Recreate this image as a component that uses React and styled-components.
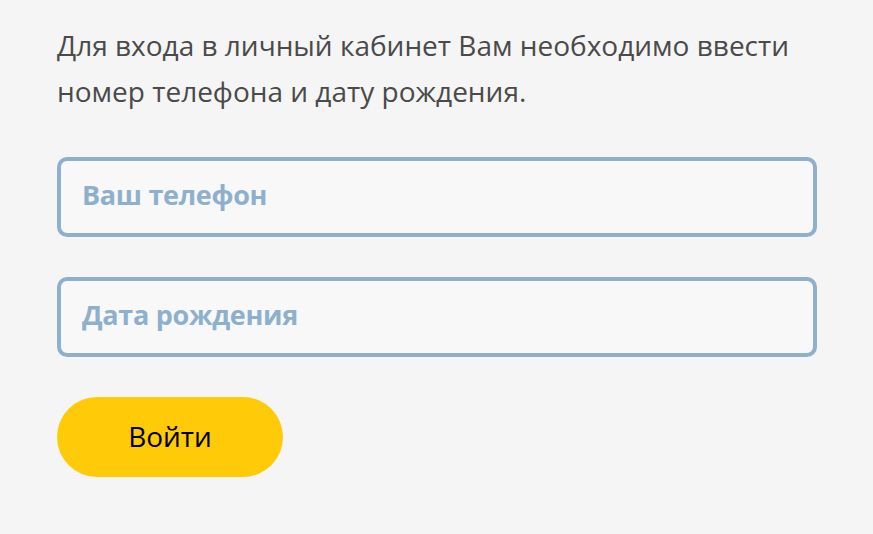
import React from 'react';
import styled, { createGlobalStyle } from 'styled-components';

const Global = createGlobalStyle`
  html, body {
    margin: 0;
    background: #f5f5f5;
  }
  body {
    font-family: "Open Sans", "Noto Sans", sans-serif;
  }
`;

const Page = styled.div`
  padding: 22px 57px 40px;
  width: 760px;
`;

const Intro = styled.p`
  margin: 0 0 43px;
  font-size: 28px;
  line-height: 46px;
  color: #4a4a4a;
  letter-spacing: 0;
`;

const Form = styled.form`
  display: flex;
  flex-direction: column;
  gap: 40px;
`;

const Field = styled.input`
  box-sizing: border-box;
  width: 100%;
  height: 80px;
  border: 4px solid #8fb0cc;
  border-radius: 10px;
  background: #f8f8f8;
  padding: 0 21px 5px;
  font-family: inherit;
  font-size: 27px;
  font-weight: 700;
  letter-spacing: -0.3px;
  color: #4a4a4a;
  outline: none;

  &::placeholder {
    color: #8fb0cc;
    opacity: 1;
  }
`;

const Submit = styled.button`
  align-self: flex-start;
  width: 226px;
  height: 80px;
  border: none;
  border-radius: 40px;
  background: #ffcb08;
  color: #000;
  font-family: inherit;
  font-size: 28px;
  padding: 0 0 2px;
  cursor: pointer;
`;

export default function App() {
  return (
    <Page>
      <Global />
      <Intro>
        Для входа в личный кабинет Вам необходимо ввести номер телефона и дату рождения.
      </Intro>
      <Form onSubmit={e => e.preventDefault()}>
        <Field type="tel" placeholder="Ваш телефон" />
        <Field type="text" placeholder="Дата рождения" />
        <Submit type="submit">Войти</Submit>
      </Form>
    </Page>
  );
}
